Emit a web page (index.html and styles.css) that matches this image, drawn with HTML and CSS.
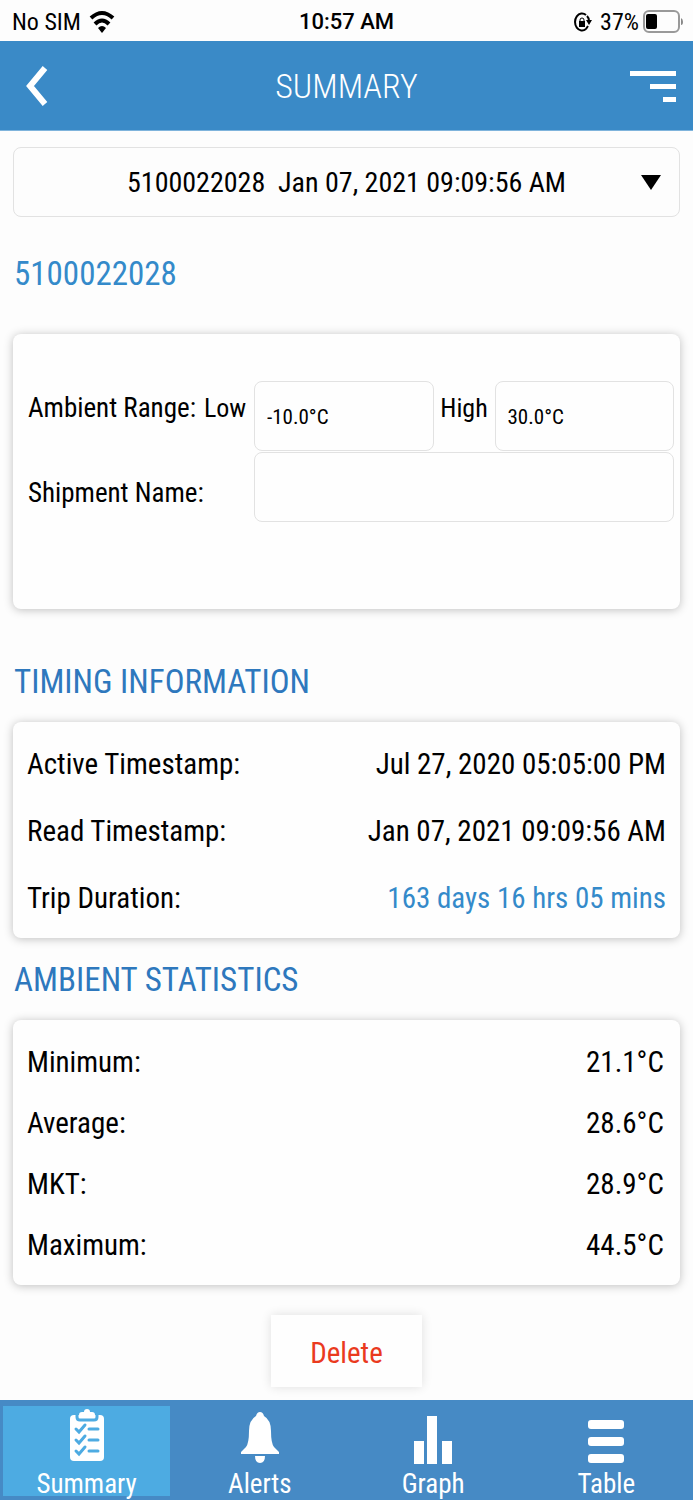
FILE: index.html
```html
<!DOCTYPE html>
<html lang="en">
<head>
  <meta charset="UTF-8" />
  <meta name="viewport" content="width=device-width, initial-scale=1.0"/>
  <title>Summary</title>
  <link rel="stylesheet" href="styles.css">
</head>
<body>
  <div class="status-bar">
    <div class="status-left">
      <span>No SIM</span>
      <svg width="26" height="24" viewBox="0 0 26 24" aria-hidden="true">
        <g fill="none" stroke="#000" stroke-width="4">
          <path d="M2 8Q13 -2 24 8"/>
          <path d="M6 14Q13 7 20 14"/>
        </g>
        <path d="M9 18Q13 14 17 18L13 23Z"/>
      </svg>
    </div>
    <div class="status-time">10:57 AM</div>
    <div class="status-right">
      <svg width="18" height="20" viewBox="0 0 18 20" aria-hidden="true">
        <path d="M12 17A7 8.500 0 1 1 12 3M13 4Q15 6 15 9M14 14L12 17" fill="none" stroke="#000" stroke-width="2"/>
        <path d="M12 8H18L15 13Z"/>
        <rect x="5" y="9" width="6" height="6"/>
        <path d="M6 9V8Q6 6 8 6T10 8V9" fill="none" stroke="#000"/>
      </svg>
      <span>37%</span>
      <svg width="40" height="24" viewBox="0 0 40 24" aria-hidden="true">
        <rect x="1" y="1" width="35" height="21" rx="5" fill="none" stroke="#999" stroke-width="2"/>
        <rect x="3" y="4" width="11" height="15" rx="2"/>
        <path d="M38 8Q40 9 40 12T38 15Z" fill="#888"/>
      </svg>
    </div>
  </div>

  <header class="header">
    <button class="icon-btn back-btn" type="button" aria-label="Back">
      <svg width="22" height="40" viewBox="0 0 22 40"><path d="M19 2L4 20L19 38" fill="none" stroke="#fff" stroke-width="6"/></svg>
    </button>
    <h1>SUMMARY</h1>
    <button class="icon-btn menu-btn" type="button" aria-label="Menu">
      <svg width="46" height="33" viewBox="0 0 46 33" fill="#fff"><path d="M0 2H46V7H0ZM20 15H46V20H20ZM33 28H46V33H33Z"/></svg>
    </button>
  </header>

  <main class="container">
    <div class="trip-select">
      <select aria-label="Trip">
        <option>5100022028&nbsp; Jan 07, 2021 09:09:56 AM</option>
      </select>
      <svg class="arrow" width="20" height="15" viewBox="0 0 20 15" aria-hidden="true"><path d="M0 0H20L10 15Z"/></svg>
    </div>

    <h2 class="serial">5100022028</h2>

    <form class="card ambient">
      <div class="field-labels">
        <span>Ambient Range:</span>
        <label for="low">Low</label>
      </div>
      <div class="range">
        <input type="text" id="low" class="input" value="-10.0°C" />
        <label for="high">High</label>
        <input type="text" id="high" class="input" value="30.0°C" />
      </div>
      <label class="shipment-label" for="shipment">Shipment Name:</label>
      <input type="text" id="shipment" class="input" />
    </form>

    <h2>TIMING INFORMATION</h2>
    <dl class="card timing">
      <div class="row"><dt>Active Timestamp:</dt><dd>Jul 27, 2020 05:05:00 PM</dd></div>
      <div class="row"><dt>Read Timestamp:</dt><dd>Jan 07, 2021 09:09:56 AM</dd></div>
      <div class="row"><dt>Trip Duration:</dt><dd class="duration">163 days 16 hrs 05 mins</dd></div>
    </dl>

    <h2>AMBIENT STATISTICS</h2>
    <dl class="card stats">
      <div class="row"><dt>Minimum:</dt><dd>21.1°C</dd></div>
      <div class="row"><dt>Average:</dt><dd>28.6°C</dd></div>
      <div class="row"><dt>MKT:</dt><dd>28.9°C</dd></div>
      <div class="row"><dt>Maximum:</dt><dd>44.5°C</dd></div>
    </dl>

    <button class="delete-btn" type="button">Delete</button>
  </main>

  <nav class="tabs">
    <a href="#summary" class="tab active">
      <svg width="34" height="54" viewBox="0 0 34 54" aria-hidden="true">
        <rect x="0" y="6" width="34" height="46" rx="4" fill="#fff"/>
        <path d="M7 5V8Q7 11 10 11H24Q27 11 27 8V5" fill="none" stroke="#4dabe2" stroke-width="3"/>
        <path d="M9 6Q9 3 12 3H14Q14 0 17 0T20 3H22Q25 3 25 6V7Q25 9 23 9H11Q9 9 9 7Z" fill="#fff"/>
        <path d="M6 20L9 23L15 16M6 31L9 34L15 27M6 42L9 45L15 38M19 20H28M19 31H28M19 42H28" fill="none" stroke="#4dabe2" stroke-width="3" stroke-linecap="round"/>
      </svg>
      <span>Summary</span>
    </a>
    <a href="#alerts" class="tab">
      <svg width="38" height="54" viewBox="0 0 38 54" fill="#fff" aria-hidden="true">
        <path d="M19 3Q22 3 23 7Q30 11 30 22Q30 34 33 38Q35 40 38 43V45H0V43Q3 40 5 38Q8 34 8 22Q8 11 15 7Q16 3 19 3Z"/>
        <path d="M14 47H24Q24 54 19 54T14 47Z"/>
      </svg>
      <span>Alerts</span>
    </a>
    <a href="#graph" class="tab">
      <svg width="38" height="54" viewBox="0 0 38 54" fill="#fff" aria-hidden="true">
        <path d="M0 32H10V55H0ZM13 7H23V55H13ZM28 32H38V55H28Z"/>
      </svg>
      <span>Graph</span>
    </a>
    <a href="#table" class="tab">
      <svg width="36" height="54" viewBox="0 0 36 54" fill="#fff" aria-hidden="true">
        <rect y="11" width="36" height="9" rx="3"/>
        <rect y="28" width="36" height="9" rx="3"/>
        <rect y="45" width="36" height="9" rx="3"/>
      </svg>
      <span>Table</span>
    </a>
  </nav>
</body>
</html>
```
FILE: styles.css
```css
:root {
  --bg-color: #fdfdfd;
  --header-bg: #3a8ac7;
  --tabs-bg: #468ac5;
  --tab-active: #4dabe2;
  --accent: #348aca;
  --heading: #2e78bd;
  --border-color: #e2e2e2;
  --danger: #ea3a1e;
}

* {
  box-sizing: border-box;
}

body {
  margin: 0;
  min-height: 100vh;
  display: flex;
  flex-direction: column;
  background-color: var(--bg-color);
  color: #000;
  font-family: "Roboto Condensed", Roboto, sans-serif;
  font-size: 29px;
}

button, input, select {
  font-family: inherit;
  color: inherit;
}

.status-bar {
  display: grid;
  grid-template-columns: 1fr auto 1fr;
  align-items: center;
  height: 41px;
  padding: 2px 10px 0;
  font-size: 24px;
}

.status-left, .status-right {
  display: flex;
  align-items: center;
  gap: 8px;
}

.status-left {
  padding-left: 2px;
}

.status-right {
  justify-content: flex-end;
}

.status-right span {
  margin-right: -4px;
}

.status-time {
  font-family: Roboto, sans-serif;
  font-size: 22px;
  font-weight: 500;
}

.header {
  display: grid;
  grid-template-columns: 1fr auto 1fr;
  align-items: center;
  height: 90px;
  padding: 0 17px;
  background: var(--header-bg);
  border-bottom: 1px solid #7fb4dc;
  color: white;
}

h1 {
  margin: 0;
  font-size: 34px;
  font-weight: 300;
}

.icon-btn {
  display: flex;
  justify-self: start;
  padding: 0;
  border: none;
  background: none;
}

.back-btn {
  padding-left: 9px;
}

.menu-btn {
  justify-self: end;
}

.container {
  padding: 16px 13px 13px;
}

.trip-select {
  position: relative;
}

.trip-select select {
  display: block;
  width: 100%;
  height: 70px;
  padding: 0 40px;
  border: 1px solid var(--border-color);
  border-radius: 8px;
  background: transparent;
  appearance: none;
  font-size: 28px;
  text-align-last: center;
}

.arrow {
  position: absolute;
  top: 28px;
  right: 19px;
  pointer-events: none;
}

h2 {
  margin: 22px 1px 20px;
  font-size: 33px;
  font-weight: 400;
  line-height: 40px;
  color: var(--heading);
}

.serial {
  margin: 37px 1px 40px;
  color: var(--accent);
}

.card {
  margin: 0;
  padding: 0 14px;
  border-radius: 8px;
  background: #fefefe;
  box-shadow: 0 1px 10px rgba(0, 0, 0, 0.25);
}

.ambient {
  display: grid;
  grid-template-columns: 226px 1fr;
  row-gap: 1px;
  align-items: center;
  margin-bottom: 53px;
  padding: 47px 6px 87px 15px;
  font-size: 27px;
}

.field-labels {
  display: flex;
  align-items: baseline;
  gap: 8px;
  padding-bottom: 16px;
  white-space: nowrap;
}

.field-labels label, .range label {
  font-size: 26px;
}

.range {
  display: grid;
  grid-template-columns: 1fr 61px 1fr;
}

.range label {
  padding-top: 12px;
  text-align: center;
}

.shipment-label {
  padding-top: 12px;
}

.input {
  width: 100%;
  height: 70px;
  padding: 2px 12px 0;
  border: 1px solid var(--border-color);
  border-radius: 8px;
  background: transparent;
  font-size: 21px;
}

.row {
  display: flex;
  justify-content: space-between;
  align-items: center;
}

dd {
  margin: 0;
}

.timing {
  padding-top: 8px;
  padding-bottom: 7px;
}

.timing .row {
  height: 67px;
}

.duration {
  color: var(--accent);
}

.stats {
  padding-top: 11px;
  padding-bottom: 10px;
}

.stats .row {
  height: 61px;
}

.stats dd {
  width: 80px;
}

.delete-btn {
  display: block;
  width: 151px;
  height: 72px;
  margin: 30px auto 0;
  padding-top: 4px;
  border: none;
  background: #fefefe;
  box-shadow: 0 0 10px rgba(0, 0, 0, 0.12);
  color: var(--danger);
  font-size: 29px;
}

.tabs {
  display: grid;
  grid-template-columns: repeat(4, 1fr);
  height: 100px;
  margin-top: auto;
  padding: 6px 0 4px;
  background: var(--tabs-bg);
  font-size: 27px;
  line-height: 32px;
}

.tab {
  display: flex;
  flex-direction: column;
  align-items: center;
  gap: 5px;
  height: 90px;
  margin: 0 3px;
  padding-top: 3px;
  color: white;
  text-decoration: none;
}

.tab svg {
  flex: none;
  overflow: visible;
}

.active {
  background: var(--tab-active);
}
```
